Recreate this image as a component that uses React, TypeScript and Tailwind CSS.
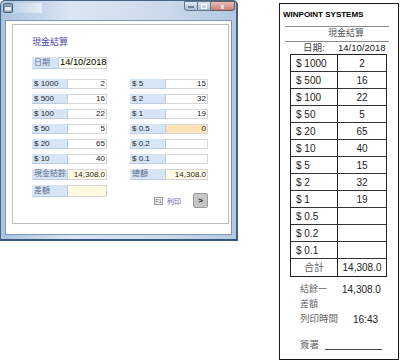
import React from "react";

type FieldProps = {
  label: string;
  value: string;
  valueCls: string;
  rowCls: string;
  labelCls?: string;
  cjk?: boolean;
};

function Field({ label, value, valueCls, rowCls, labelCls = "w-[36px]", cjk }: FieldProps) {
  return (
    <div className={`flex ${rowCls}`}>
      <div
        className={`${labelCls} h-full bg-[#d7e6f7] border-b border-r border-[#bccde2] pl-[2px] flex items-center text-[8px] ${
          cjk ? "text-[#5a6a8a]" : "text-[#2a2a2a]"
        }`}
      >
        {label}
      </div>
      <div
        className={`${valueCls} h-full border-t border-r border-b border-[#d6d6d6] pr-[1px] flex items-center justify-end text-[8px] text-[#1a1a1a]`}
      >
        {value}
      </div>
    </div>
  );
}

const leftRows = [
  ["$ 1000", "2"],
  ["$ 500", "16"],
  ["$ 100", "22"],
  ["$ 50", "5"],
  ["$ 20", "65"],
  ["$ 10", "40"],
];
const rightRows = [
  ["$ 5", "15"],
  ["$ 2", "32"],
  ["$ 1", "19"],
  ["$ 0.5", "0"],
  ["$ 0.2", ""],
  ["$ 0.1", ""],
];

const receiptRows = [
  ["$ 1000", "2"],
  ["$ 500", "16"],
  ["$ 100", "22"],
  ["$ 50", "5"],
  ["$ 20", "65"],
  ["$ 10", "40"],
  ["$ 5", "15"],
  ["$ 2", "32"],
  ["$ 1", "19"],
  ["$ 0.5", ""],
  ["$ 0.2", ""],
  ["$ 0.1", ""],
];

function Window() {
  return (
    <div className="w-[238px] h-[241px] flex flex-col border border-[#4a6584] border-r-[2px] border-r-[#4a6078] border-b-[2px] border-b-[#35567d] rounded-t-[5px] bg-[linear-gradient(90deg,#a9c2de_0%,#dbe6f3_30%,#cbdaeb_70%,#b3c8e0_100%)]">
      <div className="h-[19px] flex items-start">
        <div className="ml-[2px] mt-[2px] w-[10px] h-[10px]">
          <svg width="10" height="10" viewBox="0 0 10 10">
            <rect x="0.5" y="0.5" width="9" height="9" rx="1.5" fill="#8aa0b8" stroke="#52667e" />
            <rect x="2" y="2.5" width="6" height="5" fill="#e8eef5" />
            <rect x="2" y="2.5" width="6" height="1.5" fill="#6d87a6" />
          </svg>
        </div>
        <div className="ml-[1px] mt-[2px] w-[28px] h-[10px] bg-[linear-gradient(90deg,#c3d5ea,#eef3f9)] opacity-80" />
        <div className="flex-1" />
        <div className="flex mr-[1px]">
          <div className="w-[14px] h-[10px] border border-[#5f7690] rounded-bl-[3px] bg-[linear-gradient(180deg,#dfe8f2,#a7bdd6)] flex items-end justify-center pb-[2px]">
            <div className="w-[6px] h-[2px] bg-white border border-[#6b7f96]" />
          </div>
          <div className="w-[13px] h-[10px] border-y border-r border-[#5f7690] bg-[linear-gradient(180deg,#dfe8f2,#a7bdd6)] flex items-center justify-center">
            <div className="w-[6px] h-[5px] border border-white" />
          </div>
          <div className="w-[24px] h-[10px] border-y border-r border-[#6a5a62] rounded-br-[3px] bg-[linear-gradient(180deg,#e8bdb6,#c98075)] flex items-center justify-center text-white text-[7px] font-bold leading-none">
            x
          </div>
        </div>
      </div>
      <div className="flex-1 mx-[4px] mb-[4px] bg-white border border-[#7f97b4] pt-[3px] pl-[6px] pr-[2px] pb-[10px] flex">
        <div className="flex-1 border border-[#bdbdbd] flex flex-col pl-[19px]">
          <div className="mt-[11px] text-[9px] leading-[12px] text-[#4b4b9b]">現金結算</div>
          <div className="mt-[9px] flex h-[12px]">
            <div className="w-[27px] h-full bg-[#d7e6f7] border-b border-r border-[#bccde2] pl-[2px] flex items-center text-[8px] text-[#5a6a8a]">
              日期
            </div>
            <div className="w-[48px] h-full bg-[#fffff4] border-t border-r border-b border-[#d0d0d0] pl-[1px] flex items-center text-[9.3px] text-black">
              14/10/2018
            </div>
          </div>
          <div className="mt-[10px] grid grid-cols-[75px_78px] gap-x-[23px] gap-y-[5px]">
            {leftRows.map((l, i) => (
              <React.Fragment key={i}>
                <Field label={l[0]} value={l[1]} rowCls="h-[10px]" valueCls="w-[39px] bg-white" />
                <Field
                  label={rightRows[i][0]}
                  value={rightRows[i][1]}
                  rowCls="h-[10px]"
                  valueCls={i === 3 ? "w-[42px] bg-[#fde3b5]" : "w-[42px] bg-white"}
                />
              </React.Fragment>
            ))}
            <Field label="現金結餘" value="14,308.0" rowCls="h-[11px]" valueCls="w-[39px] bg-[#fffbe3]" cjk />
            <Field label="總額" value="14,308.0" rowCls="h-[11px]" valueCls="w-[42px] bg-[#fffbe3]" cjk />
          </div>
          <div className="mt-[5px] flex items-start">
            <Field label="差額" value="" rowCls="h-[12px]" valueCls="w-[39px] bg-[#fffbe3]" cjk />
            <div className="w-[101px] flex items-start">
              <div className="ml-[47px] mt-[12px] flex items-center gap-[4px]">
                <div className="w-[9px] h-[8px] border border-[#9a9a9a] bg-[#f4f4f4] text-[5px] leading-none flex items-center justify-center text-[#555]">
                  F1
                </div>
                <div className="text-[7px] leading-none text-[#5a5aaa]">列印</div>
              </div>
              <div className="ml-auto mt-[8px] w-[15px] h-[15px] bg-[#c6c6c6] border border-[#9c9c9c] rounded-[2px] flex items-center justify-center text-[8px] font-bold text-[#222] leading-none">
                &gt;
              </div>
            </div>
          </div>
        </div>
      </div>
    </div>
  );
}

function Receipt() {
  return (
    <div className="ml-[41px] mt-[3px] w-[120px] h-[357px] border border-[#1a1a1a] flex flex-col pt-[6px]">
      <div className="pl-[3px] h-[10px] leading-[10px] text-[8px] font-bold text-black whitespace-nowrap">
        WINPOINT SYSTEMS
      </div>
      <div className="mt-[6px] ml-[5px] w-[104px] h-[1px] bg-[#8a8a8a]" />
      <div className="h-[13px] leading-[13px] text-center pl-[14px] text-[9px] text-[#555]">現金結算</div>
      <div className="mt-[1px] ml-[5px] w-[104px] h-[1px] bg-[#8a8a8a]" />
      <div className="h-[12px] leading-[12px] flex text-[9.5px]">
        <div className="ml-[23px] w-[35px] text-[#444]">日期:</div>
        <div className="text-[#222]">14/10/2018</div>
      </div>
      <div className="ml-[10px] w-[97px] border border-[#222] flex flex-col">
        {receiptRows.map((r, i) => (
          <div key={i} className="flex h-[17px] border-b border-[#333]">
            <div className="w-[47px] border-r border-[#222] pl-[5px] flex items-center text-[10px] text-[#222]">
              {r[0]}
            </div>
            <div className="flex-1 flex items-center justify-center text-[10px] text-[#222]">{r[1]}</div>
          </div>
        ))}
        <div className="flex h-[17px]">
          <div className="w-[47px] border-r border-[#222] flex items-center justify-center text-[10px] text-[#666]">
            合計
          </div>
          <div className="flex-1 flex items-center justify-center text-[10px] text-[#222]">14,308.0</div>
        </div>
      </div>
      <div className="mt-[5px] pl-[20px] flex flex-col">
        <div className="h-[15px] flex items-center">
          <div className="w-[42px] text-[9px] text-[#666]">結餘一</div>
          <div className="text-[10px] text-[#222]">14,308.0</div>
        </div>
        <div className="h-[15px] flex items-center">
          <div className="text-[9px] text-[#666]">差額</div>
        </div>
        <div className="h-[15px] flex items-center">
          <div className="w-[53px] text-[9.5px] text-[#666]">列印時間</div>
          <div className="text-[10px] text-[#222]">16:43</div>
        </div>
        <div className="mt-[11px] h-[15px] flex items-center">
          <div className="w-[25px] text-[9.5px] text-[#666]">簽署</div>
          <div className="mt-[8px] w-[57px] h-[1px] bg-[#444]" />
        </div>
      </div>
    </div>
  );
}

export default function App() {
  return (
    <div className="w-[400px] h-[360px] bg-white flex items-start font-['Liberation_Sans','Noto_Sans_CJK_TC',sans-serif] overflow-hidden">
      <Window />
      <Receipt />
    </div>
  );
}
